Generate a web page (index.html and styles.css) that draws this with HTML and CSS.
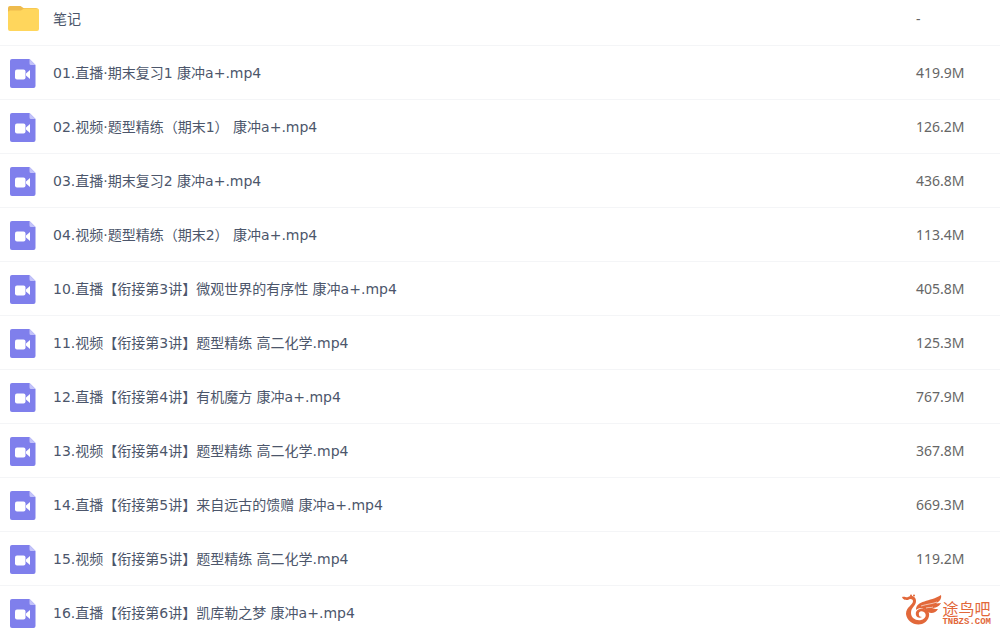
FILE: index.html
```html
<!DOCTYPE html>
<html lang="zh-CN">
<head>
  <meta charset="UTF-8">
  <meta name="viewport" content="width=device-width, initial-scale=1.0">
  <title>文件列表</title>
  <link rel="stylesheet" href="styles.css">
</head>
<body>
  <svg class="sprite" aria-hidden="true">
    <symbol id="icon-folder" viewBox="0 0 32 26">
      <path fill="#eebb4d" d="M2 0h10.500l3 2H28a2 2 0 0 1 2 2v5H0V2a2 2 0 0 1 2-2z"/>
      <path fill="#ffd65c" d="M2 4.500h11l3-2h13.500a1.500 1.500 0 0 1 1.500 1.500V23a2 2 0 0 1-2 2H2A2 2 0 0 1 0 23V6.500a2 2 0 0 1 2-2z"/>
    </symbol>
    <symbol id="icon-video" viewBox="0 0 26 30">
      <path fill="#7f7fec" d="M2 1h17.500L25.500 7V28a2 2 0 0 1-2 2H2a2 2 0 0 1-2-2V3a2 2 0 0 1 2-2z"/>
      <path fill="#c3c3fa" d="M19.500 1L25.500 7h-4.500a1.500 1.500 0 0 1-1.500-1.500z"/>
      <rect x="5" y="11.500" width="10.500" height="10" rx="2" fill="#fff"/>
      <path fill="#fff" d="M16 15.500l4-3.500v9l-4-3.500z"/>
    </symbol>
  </svg>

  <main class="file-panel">
    <table class="file-list">
      <tbody>
        <tr>
          <td class="name"><a href="#"><svg class="icon folder"><use href="#icon-folder"/></svg>笔记</a></td>
          <td class="size">-</td>
        </tr>
        <tr>
          <td class="name"><a href="#"><svg class="icon"><use href="#icon-video"/></svg>01.直播·期末复习1 康冲a+.mp4</a></td>
          <td class="size">419.9M</td>
        </tr>
        <tr>
          <td class="name"><a href="#"><svg class="icon"><use href="#icon-video"/></svg>02.视频·题型精练（期末1） 康冲a+.mp4</a></td>
          <td class="size">126.2M</td>
        </tr>
        <tr>
          <td class="name"><a href="#"><svg class="icon"><use href="#icon-video"/></svg>03.直播·期末复习2 康冲a+.mp4</a></td>
          <td class="size">436.8M</td>
        </tr>
        <tr>
          <td class="name"><a href="#"><svg class="icon"><use href="#icon-video"/></svg>04.视频·题型精练（期末2） 康冲a+.mp4</a></td>
          <td class="size">113.4M</td>
        </tr>
        <tr>
          <td class="name"><a href="#"><svg class="icon"><use href="#icon-video"/></svg>10.直播【衔接第3讲】微观世界的有序性 康冲a+.mp4</a></td>
          <td class="size">405.8M</td>
        </tr>
        <tr>
          <td class="name"><a href="#"><svg class="icon"><use href="#icon-video"/></svg>11.视频【衔接第3讲】题型精练 高二化学.mp4</a></td>
          <td class="size">125.3M</td>
        </tr>
        <tr>
          <td class="name"><a href="#"><svg class="icon"><use href="#icon-video"/></svg>12.直播【衔接第4讲】有机魔方 康冲a+.mp4</a></td>
          <td class="size">767.9M</td>
        </tr>
        <tr>
          <td class="name"><a href="#"><svg class="icon"><use href="#icon-video"/></svg>13.视频【衔接第4讲】题型精练 高二化学.mp4</a></td>
          <td class="size">367.8M</td>
        </tr>
        <tr>
          <td class="name"><a href="#"><svg class="icon"><use href="#icon-video"/></svg>14.直播【衔接第5讲】来自远古的馈赠 康冲a+.mp4</a></td>
          <td class="size">669.3M</td>
        </tr>
        <tr>
          <td class="name"><a href="#"><svg class="icon"><use href="#icon-video"/></svg>15.视频【衔接第5讲】题型精练 高二化学.mp4</a></td>
          <td class="size">119.2M</td>
        </tr>
        <tr>
          <td class="name"><a href="#"><svg class="icon"><use href="#icon-video"/></svg>16.直播【衔接第6讲】凯库勒之梦 康冲a+.mp4</a></td>
          <td class="size"></td>
        </tr>
      </tbody>
    </table>

    <div class="watermark">
      <svg class="bird" viewBox="0 0 40 32" aria-hidden="true">
        <g fill="#e2683a">
          <path d="M0 3C3 2 4 4 6 3C9 1 14 2 14 7C14 12 9 13 9 19C9 24 14 27 19 26C24 25 25 20 22 18C19 16 16 18 17 21C17 22 18 23 20 23C16 25 13 22 14 18C16 14 22 14 26 17C29 21 26 28 20 30C12 32 5 27 4 20C4 13 11 11 11 7C11 5 8 4 6 6C4 6 1 6 0 3z"/>
          <path d="M14 16C14 6 28 8 39 1C40 5 37 8 34 9C35 10 38 9 39 9C37 13 33 14 30 14C32 15 35 15 36 15C34 19 29 20 26 18C22 14 17 13 14 16z"/>
          <circle cx="9" cy="1.500" r="1"/>
          <circle cx="12" cy="1.500" r="1"/>
        </g>
        <path fill="none" stroke="#fff" stroke-width=".6" d="M19 12C25 10 30 10 35 8M24 14C27 13 29 14 31 13"/>
      </svg>
      <div class="brand">
        <span class="brand-name">途鸟吧</span>
        <span class="brand-site">TNBZS.COM</span>
      </div>
    </div>
  </main>
</body>
</html>
```
FILE: styles.css
```css
body {
  margin: 0;
  font-family: "Noto Sans", "Noto Sans CJK SC", sans-serif;
  background-color: #fff;
  color: #4c566b;
}

.sprite {
  display: none;
}

.file-panel {
  position: relative;
  height: 100vh;
  overflow: hidden;
}

/* the first row is partly scrolled under the top edge */
.file-list {
  width: 100%;
  margin-top: -8px;
  border-collapse: separate;
  border-spacing: 0;
  table-layout: fixed;
}

.file-list td {
  height: 53px;
  padding: 0;
  border-bottom: 1px solid #f4f5f7;
  vertical-align: middle;
}

.name a {
  display: flex;
  align-items: center;
  color: #4c566b;
  font-family: "DejaVu Sans", "Noto Sans CJK SC", sans-serif;
  font-size: 14px;
  line-height: 20px;
  text-decoration: none;
  white-space: nowrap;
}

.name a:hover {
  color: #06a7ff;
}

.icon {
  width: 26px;
  height: 30px;
  margin: 0 17px 0 10px;
}

.icon.folder {
  width: 32px;
  height: 26px;
  margin: 0 13px 0 8px;
}

.file-list .size {
  width: 84px;
  color: #666;
  font-size: 14px;
  line-height: 20px;
}

.watermark {
  position: absolute;
  right: 9px;
  bottom: 4px;
  display: flex;
  align-items: flex-end;
  color: #e2683a;
}

.bird {
  width: 40px;
  height: 32px;
}

.brand {
  display: flex;
  flex-direction: column;
}

.brand-name {
  font-size: 16px;
  line-height: 18px;
}

.brand-site {
  font-family: "Liberation Mono", monospace;
  font-size: 9px;
  font-weight: bold;
  line-height: 8px;
}
```
